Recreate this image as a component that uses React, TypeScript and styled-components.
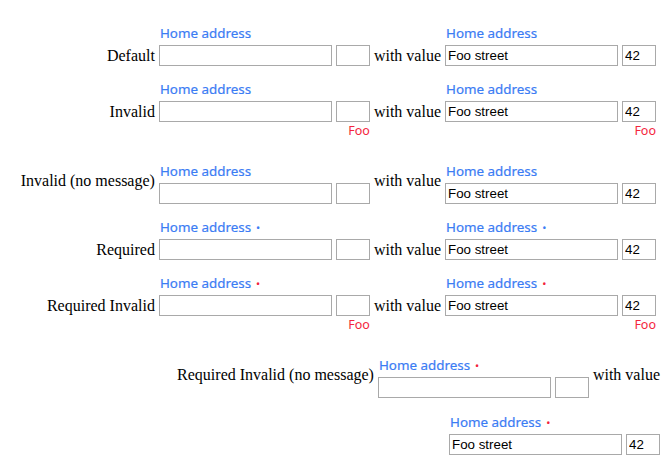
import React from "react";
import styled, { createGlobalStyle } from "styled-components";

const Global = createGlobalStyle`
  html, body { margin: 0; padding: 0; background: #fff; }
  body { font-family: "Liberation Serif", "Times New Roman", serif; font-size: 16px; color: #000; }
`;

const Page = styled.div`
  display: flex;
  flex-direction: column;
  gap: 14px;
  padding: 24px 10px 8px 8px;
`;

const Row = styled.div<{ $trail?: boolean }>`
  display: flex;
  flex-wrap: wrap;
  justify-content: flex-end;
  align-items: flex-start;
  column-gap: 4px;
  row-gap: 15px;
  padding-right: ${(p) => (p.$trail ? "4px" : "0")};
`;

const RowText = styled.span<{ $offset: number }>`
  font-family: "Liberation Serif", "Times New Roman", serif;
  font-size: 16px;
  line-height: 18px;
  white-space: nowrap;
  margin-top: ${(p) => p.$offset}px;
`;

const FieldBox = styled.div`
  display: flex;
  flex-direction: column;
`;

const FieldLabel = styled.div`
  font-family: "Noto Sans", "Segoe UI", sans-serif;
  font-size: 13.4px;
  line-height: 18px;
  height: 18px;
  margin-bottom: 3px;
  color: #3b7cf4;
  padding-left: 1px;
  white-space: nowrap;
  -webkit-text-stroke: 0.2px #3b7cf4;
`;

const Dot = styled.span<{ $invalid?: boolean }>`
  margin-left: 5px;
  font-size: 11px;
  color: ${(p) => (p.$invalid ? "#f2233b" : "#3b7cf4")};
  -webkit-text-stroke: 0;
`;

const Inputs = styled.div`
  display: flex;
  gap: 4px;
`;

const TextInput = styled.input<{ $small?: boolean }>`
  box-sizing: border-box;
  width: ${(p) => (p.$small ? "34px" : "173px")};
  height: 21px;
  margin: 0;
  padding: 1px 2px;
  border: 1px solid #a9a9a9;
  border-radius: 0;
  background: #fff;
  font-family: "Liberation Sans", Arial, sans-serif;
  font-size: 13.333px;
  color: #000;
  outline: none;
`;

const ErrorText = styled.div`
  font-family: "Noto Sans", "Segoe UI", sans-serif;
  font-size: 12.5px;
  line-height: 18px;
  color: #f4253d;
  text-align: right;
  padding-bottom: 8px;
`;

type FieldProps = {
  filled?: boolean;
  required?: boolean;
  invalid?: boolean;
  message?: string;
};

function Field({ filled, required, invalid, message }: FieldProps) {
  return (
    <FieldBox>
      <FieldLabel>
        Home address
        {required && <Dot $invalid={invalid}>•</Dot>}
      </FieldLabel>
      <Inputs>
        <TextInput type="text" readOnly value={filled ? "Foo street" : ""} />
        <TextInput type="text" $small readOnly value={filled ? "42" : ""} />
      </Inputs>
      {message && <ErrorText>{message}</ErrorText>}
    </FieldBox>
  );
}

type RowSpec = {
  title: string;
  required?: boolean;
  invalid?: boolean;
  message?: string;
  noMessage?: boolean;
};

const rows: RowSpec[] = [
  { title: "Default" },
  { title: "Invalid", invalid: true, message: "Foo" },
  { title: "Invalid (no message)", invalid: true, noMessage: true },
  { title: "Required", required: true },
  { title: "Required Invalid", required: true, invalid: true, message: "Foo" },
  { title: "Required Invalid (no message)", required: true, invalid: true, noMessage: true },
];

export default function App() {
  return (
    <>
      <Global />
      <Page>
        {rows.map((r, i) => {
          const offset = r.noMessage ? 10 : 23;
          const last = i === rows.length - 1;
          return (
            <Row key={r.title} $trail={!last}>
              <RowText $offset={offset}>{r.title}</RowText>
              <Field required={r.required} invalid={r.invalid} message={r.message} />
              <RowText $offset={offset}>with value</RowText>
              <Field filled required={r.required} invalid={r.invalid} message={r.message} />
            </Row>
          );
        })}
      </Page>
    </>
  );
}
